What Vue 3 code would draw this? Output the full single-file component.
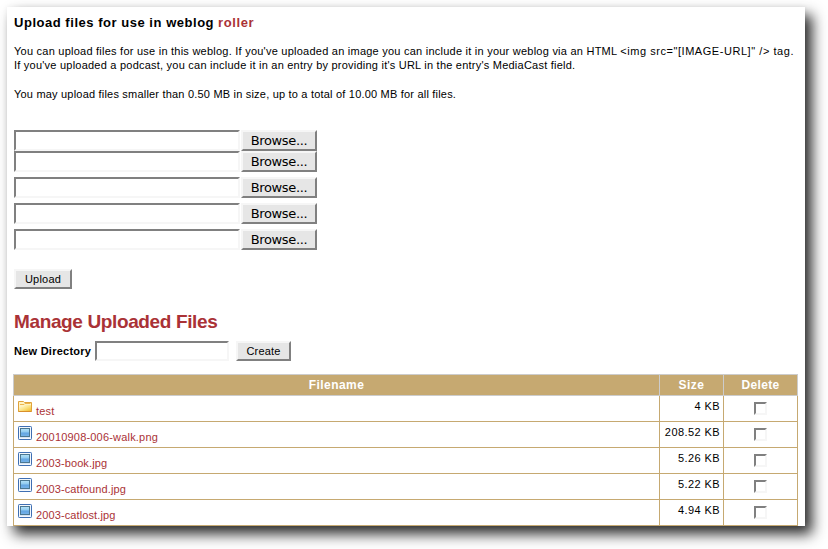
<script setup>
const slots = [1, 2, 3, 4, 5]
const files = [
  { name: 'test', size: '4 KB', folder: true, cls: 'n0' },
  { name: '20010908-006-walk.png', size: '208.52 KB', cls: 'n1' },
  { name: '2003-book.jpg', size: '5.26 KB', cls: 'n2' },
  { name: '2003-catfound.jpg', size: '5.22 KB', cls: 'n3' },
  { name: '2003-catlost.jpg', size: '4.94 KB', cls: 'n4' }
]
</script>

<template>
  <div class="page">
  <main class="panel">
    <h1><span class="title">Upload files for use in weblog</span><a class="roller">roller</a></h1>
    <p class="intro"><span class="l1">You can upload files for use in this weblog. If you've uploaded an image you can include it in your weblog via an HTML </span><span class="tag">&lt;img src="[IMAGE-URL]" /&gt; tag.</span></p>
    <p class="intro second"><span class="l2">If you've uploaded a podcast, you can include it in an entry by providing it's URL in the entry's MediaCast field.</span></p>
    <p class="intro"><span class="l3">You may upload files smaller than 0.50 MB in size, up to a total of 10.00 MB for all files.</span></p>

    <div class="uploads">
      <div v-for="s in slots" :key="s" class="upload">
        <div class="field"></div>
        <button class="browse"><span>Browse...</span></button>
      </div>
    </div>
    <button class="btn send"><span>Upload</span></button>

    <h2><span>Manage Uploaded Files</span></h2>
    <div class="newdir">
      <label><span>New Directory</span></label>
      <div class="field dir"></div>
      <button class="btn create"><span>Create</span></button>
    </div>

    <div class="table">
      <div class="row head">
        <div><span class="hf">Filename</span></div>
        <div><span class="hs">Size</span></div>
        <div><span class="hd">Delete</span></div>
      </div>
      <div v-for="f in files" :key="f.name" class="row">
        <div class="name">
          <svg v-if="f.folder" width="14" height="14" viewBox="0 -1 14 14">
            <defs>
              <linearGradient id="fold" x1="0" y1="0" x2="1" y2="1">
                <stop offset="0" stop-color="#fffbe0" /><stop offset=".5" stop-color="#fbe48a" /><stop offset="1" stop-color="#f3bd2c" />
              </linearGradient>
            </defs>
            <path d="M.5 10.5V.5h5l1 1h7v9z" fill="#fff3c4" stroke="#e0a33a" />
            <path d="M2 3.5h4l1-1h5.5" fill="none" stroke="#edb64c" />
            <path d="M1 10V5.5h4.8l1.2-1.4h6V10z" fill="url(#fold)" />
            <path d="M.5 10.5h13" stroke="#d98f2b" />
          </svg>
          <svg v-else width="14" height="14" viewBox="0 0 14 14">
            <defs>
              <linearGradient id="pic" x1="0" y1="0" x2="0" y2="1">
                <stop offset="0" stop-color="#b5e3f7" /><stop offset=".45" stop-color="#8fcaf0" /><stop offset=".55" stop-color="#62a5e2" /><stop offset="1" stop-color="#78b4e9" />
              </linearGradient>
            </defs>
            <rect x=".5" y=".5" width="13" height="13" rx=".8" fill="#f3f8fd" stroke="#3f6fb3" />
            <rect x="2.5" y="2.5" width="9" height="8" fill="url(#pic)" stroke="#4b7791" />
            <path d="M2 11.5h10" stroke="#d5e3f4" />
          </svg>
          <a :class="f.cls">{{ f.name }}</a>
        </div>
        <div class="size"><span>{{ f.size }}</span></div>
        <div class="del"><i class="check"></i></div>
      </div>
    </div>
  </main>
  </div>
</template>

<style>
body { background: #fff; }
</style>

<style scoped>
* { box-sizing: border-box; }
.page { height: 549px; padding: 7px 0 0 7px; background: #fff; overflow: hidden; }
.panel {
  width: 798px;
  height: 519px;
  padding: 8px 7px 0;
  background: #fff;
  box-shadow: 7px 8px 13px rgba(0, 0, 0, .84), 0 0 5px rgba(0, 0, 0, .05);
  font: 11px/14px "Liberation Sans", Arial, sans-serif;
  color: #000;
  white-space: nowrap;
}
h1 { margin: 0 0 14px; font-size: 13px; line-height: 15px; display: flex; gap: 4px; }
.title { letter-spacing: .53px; }
.roller { letter-spacing: .6px; }
a { color: #aa3236; }
.intro { margin: 0; height: 14px; line-height: 14px; }
.second { margin-bottom: 15px; }
.l1 { letter-spacing: .238px; }
.tag { letter-spacing: .55px; }
.l2 { letter-spacing: .227px; }
.l3 { letter-spacing: .2px; }
.uploads { margin-top: 29px; display: flex; flex-direction: column; gap: 5px; }
.upload { display: flex; gap: 1px; height: 21px; }
.upload:first-child { margin-bottom: -5px; }
.field { width: 226px; height: 21px; border: 2px solid; border-color: #808080 #f6f6f6 #f6f6f6 #808080; background: #fff; }
button { display: flex; align-items: center; justify-content: center; padding: 0; margin: 0; border: 2px solid; border-color: #f6f6f6 #808080 #808080 #f6f6f6; background: #e6e6e6; color: #000; border-radius: 0; }
.browse { width: 76px; height: 21px; font: 13px/15px "DejaVu Sans", sans-serif; letter-spacing: -.35px; }
.btn { font: 11px/14px "Liberation Sans", Arial, sans-serif; height: 20px; letter-spacing: .2px; }
.send { width: 58px; margin: 19px 0 0; height: 20px; }
h2 { margin: 21px 0 0; height: 23px; font-size: 19px; line-height: 24px; color: #aa3236; }
h2 span { letter-spacing: -.37px; }
.newdir { display: flex; height: 20px; margin-top: 8px; align-items: center; }
label { width: 81px; font-weight: bold; letter-spacing: .25px; }
.dir { width: 134px; height: 20px; }
.create { width: 55px; margin-left: 7px; }
.table { margin: 13px 0 0 -1px; width: 785px; }
.row { display: grid; grid-template-columns: 646px 64px 74px; height: 26px; border-left: 1px solid #c6a971; }
.row > div { border-right: 1px solid #c6a971; border-bottom: 1px solid #c6a971; }
.row.head { height: 22px; background: #c6a971; border: 1px solid #ccc; border-right: 0; border-bottom: 0; }
.row.head > div { border-color: #ccc; color: #fff; font: bold 12px/20px "Liberation Sans", Arial, sans-serif; text-align: center; }
.hf, .hs { letter-spacing: .45px; }
.hd { letter-spacing: .3px; }
.name { display: flex; gap: 4px; padding: 4px 0 0 4px; }
.name a { padding-top: 4px; }
.n0, .n1 { letter-spacing: .19px; }
.n2, .n3, .n4 { letter-spacing: .11px; }
.size { text-align: right; padding: 3px 3px 0 0; letter-spacing: .42px; }
.del { display: flex; justify-content: center; padding-top: 6px; }
.check { width: 13px; height: 13px; border: 2px solid; border-color: #808080 #f6f6f6 #f6f6f6 #808080; }
</style>
